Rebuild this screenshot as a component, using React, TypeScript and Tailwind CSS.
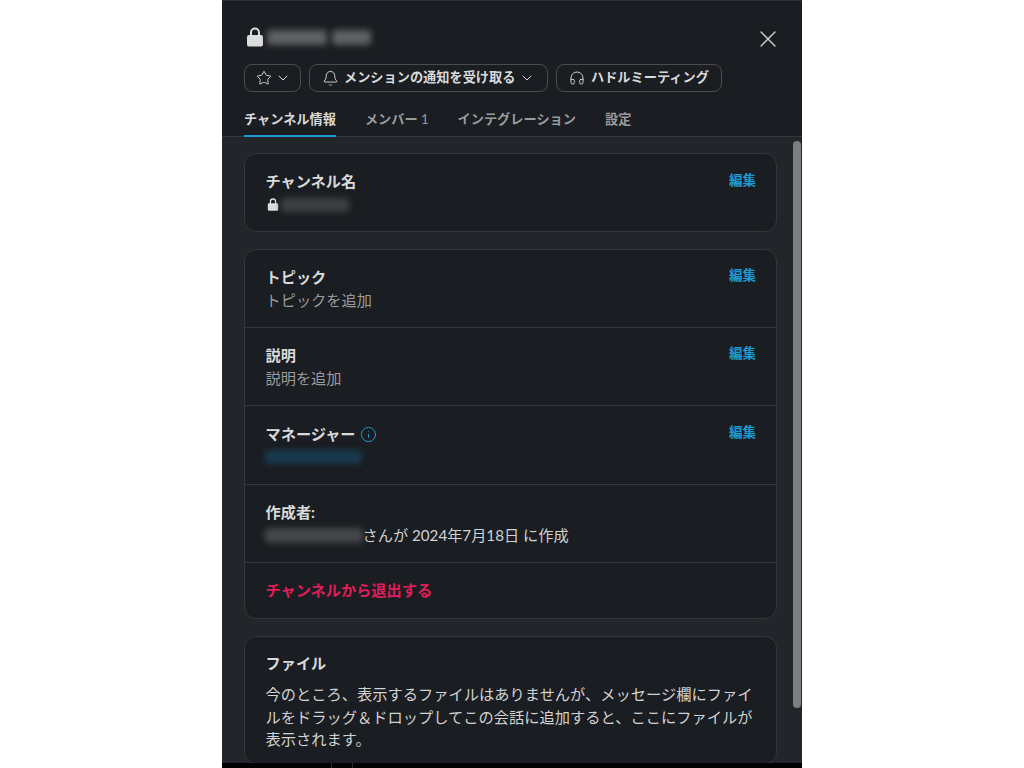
import { ChevronDown, Headphones, Bell, Star, X, Info } from "lucide-react";

function Blur({ className }: { className: string }) {
  return <div className={`rounded-sm blur-[3px] ${className}`} />;
}

function LockIcon({ className }: { className: string }) {
  return (
    <svg viewBox="0 0 18 20" className={`fill-[#dcdcdd] ${className}`}>
      <path d="M4 8V5.5a5 5 0 0 1 10 0V8h1a2 2 0 0 1 2 2v7.5a2 2 0 0 1-2 2H3a2 2 0 0 1-2-2V10a2 2 0 0 1 2-2zm2 0h6V5.5a3 3 0 0 0-6 0z" />
    </svg>
  );
}

function EditLink() {
  return <span className="text-[13.5px] font-bold leading-[18px] text-[#1d9bd1]">編集</span>;
}

function Row({ title, children, edit, tall }: { title: React.ReactNode; children: React.ReactNode; edit?: boolean; tall?: boolean }) {
  return (
    <div className={`flex justify-between border-b border-[#33363a] pl-[20.5px] pr-[20px] ${tall ? "h-[79px] pt-[17px]" : "h-[78px] pt-[16px]"}`}>
      <div>
        <div className="flex items-center gap-[4px] text-[15.2px] font-bold leading-[22px] text-[#d8d9da]">{title}</div>
        <div className="pt-[1px] text-[15.2px] leading-[23px] text-[#9a9b9d]">{children}</div>
      </div>
      {edit && <div className="-mt-[4px]"><EditLink /></div>}
    </div>
  );
}

const tabs = ["メンバー", "インテグレーション", "設定"];

export default function App() {
  return (
    <div className="flex h-[768px] justify-center overflow-hidden bg-white font-['Lato','Noto_Sans_CJK_JP',sans-serif]">
      <div className="flex h-[768px] w-[580px] flex-col border-t border-[#2c2f33] bg-[#1a1d21]">
        {/* header */}
        <div className="h-[136px] shrink-0 border-b border-[#33363a] pl-[22px] pr-[20px]">
          <div className="flex h-[63px] items-center justify-between pb-[2px] pt-[11px]">
            <div className="flex items-center gap-[3px] pl-[2px]">
              <LockIcon className="h-[20px] w-[18px]" />
              <div className="mt-[1px] flex gap-[5px]">
                <Blur className="h-[15px] w-[60px] bg-[#5f6164]" />
                <Blur className="h-[15px] w-[39px] bg-[#5f6164]" />
              </div>
            </div>
            <X className="mt-[3px] h-[28px] w-[28px] text-[#d1d2d3]" strokeWidth={1.1} />
          </div>
          <div className="flex h-[28px] gap-[8px] text-[13.2px] font-bold text-[#d8d9da]">
            <div className="flex w-[57px] items-center gap-[3px] rounded-lg border border-[#4a4c50] pl-[11px]">
              <Star className="h-[16px] w-[16px]" strokeWidth={1.4} />
              <ChevronDown className="h-[16px] w-[16px]" strokeWidth={1.5} />
            </div>
            <div className="flex w-[239px] items-center rounded-lg border border-[#4a4c50] pl-[12px]">
              <Bell className="h-[17px] w-[17px]" strokeWidth={1.3} />
              <span className="ml-[5px]">メンションの通知を受け取る</span>
              <ChevronDown className="ml-[4px] h-[16px] w-[16px]" strokeWidth={1.5} />
            </div>
            <div className="flex w-[166px] items-center rounded-lg border border-[#4a4c50] pl-[12px]">
              <Headphones className="h-[16px] w-[16px]" strokeWidth={1.4} />
              <span className="ml-[6px]">ハドルミーティング</span>
            </div>
          </div>
          <div className="mt-[13px] flex h-[32px] gap-[29px] text-[13.2px] font-bold leading-[28px] text-[#9a9b9d]">
            <div className="h-[32px] border-b-2 border-[#1d9bd1] text-[#d8d9da]">チャンネル情報</div>
            <div>
              {tabs[0]} <span className="font-normal">1</span>
            </div>
            <div>{tabs[1]}</div>
            <div>{tabs[2]}</div>
          </div>
        </div>

        {/* body */}
        <div className="flex min-h-0 flex-1 bg-[#222529]">
          <div className="flex w-[571px] flex-col gap-[17px] overflow-hidden pl-[22px] pr-[16px] pt-[16px]">
            <div className="flex h-[79px] shrink-0 justify-between rounded-xl border border-[#33363a] bg-[#1a1d21] pl-[20.5px] pr-[20px] pt-[16px]">
              <div>
                <div className="text-[15.2px] font-bold leading-[22px] text-[#d8d9da]">チャンネル名</div>
                <div className="flex h-[25px] items-center gap-[2px] pl-[1px]">
                  <LockIcon className="h-[13px] w-[12px]" />
                  <Blur className="h-[14px] w-[68px] bg-[#3e4043]" />
                </div>
              </div>
              <div className="-mt-[3px]"><EditLink /></div>
            </div>

            <div className="shrink-0 rounded-xl border border-[#33363a] bg-[#1a1d21]">
              <Row title="トピック" edit>トピックを追加</Row>
              <Row title="説明" edit>説明を追加</Row>
              <Row
                tall
                title={
                  <>
                    マネージャー
                    <Info className="h-[17px] w-[17px] text-[#1d9bd1]" strokeWidth={1.4} />
                  </>
                }
                edit
              >
                <Blur className="-ml-[1px] mt-[4px] h-[14px] w-[97px] bg-[#183a4e]" />
              </Row>
              <Row title="作成者:">
                <div className="flex items-center text-[#d1d2d3]">
                  <Blur className="-ml-[1px] h-[15px] w-[98px] bg-[#45474a]" />
                  <span>さんが 2024年7月18日 に作成</span>
                </div>
              </Row>
              <div className="h-[55px] pl-[20.5px] pt-[15px] text-[15.2px] font-bold leading-[24px] text-[#e01e5a]">
                チャンネルから退出する
              </div>
            </div>

            <div className="shrink-0 rounded-xl border border-[#33363a] bg-[#1a1d21] pb-[12px] pl-[20.5px] pr-[20px] pt-[15px]">
              <div className="text-[15.2px] font-bold leading-[22px] text-[#d8d9da]">ファイル</div>
              <p className="mt-[9px] text-[15.25px] leading-[22.5px] text-[#d1d2d3]">
                今のところ、表示するファイルはありませんが、メッセージ欄にファイルをドラッグ＆ドロップしてこの会話に追加すると、ここにファイルが表示されます。
              </p>
            </div>
          </div>
          <div className="w-[9px] pt-[4px]">
            <div className="h-[567px] w-[8px] rounded-full bg-[#7d8083]" />
          </div>
        </div>
        <div className="flex h-[5px] shrink-0 gap-[20px] bg-black pl-[109px]">
          <div className="h-[5px] w-px bg-[#2c2f33]" />
          <div className="h-[5px] w-px bg-[#2c2f33]" />
        </div>
      </div>
    </div>
  );
}
